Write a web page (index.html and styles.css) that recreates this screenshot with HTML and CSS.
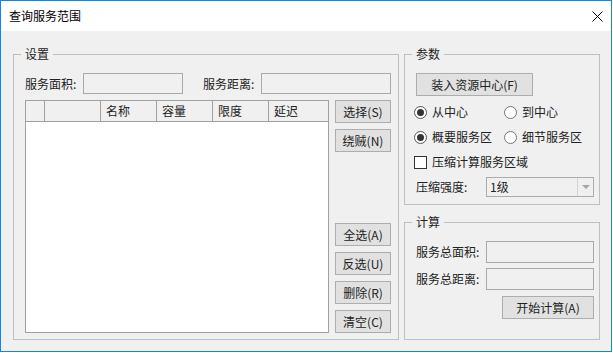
FILE: index.html
```html
<!DOCTYPE html>
<html lang="zh-CN">
<head>
    <meta charset="UTF-8">
    <title>查询服务范围</title>
    <link rel="stylesheet" href="styles.css">
</head>
<body>
    <div class="window">
        <div class="titlebar">
            <span class="title">查询服务范围</span>
            <svg class="close" width="11" height="11" viewBox="0 0 11 11">
                <path d="M0.5 0.5 L10.5 10.5 M10.5 0.5 L0.5 10.5" stroke="#000" stroke-width="1" fill="none"/>
            </svg>
        </div>
        <div class="content">
            <div class="group group-main">
                <span class="legend">设置</span>
                <div class="field-row">
                    <span class="label">服务面积:</span>
                    <div class="textbox area-box"></div>
                    <span class="label label-gap">服务距离:</span>
                    <div class="textbox dist-box"></div>
                </div>
                <div class="list-row">
                    <div class="grid">
                        <div class="grid-head">
                            <div class="cell"></div>
                            <div class="cell"></div>
                            <div class="cell">名称</div>
                            <div class="cell">容量</div>
                            <div class="cell">限度</div>
                            <div class="cell">延迟</div>
                        </div>
                        <div class="grid-body"></div>
                    </div>
                    <div class="side-buttons">
                        <div class="btn-stack">
                            <button class="btn small">选择(S)</button>
                            <button class="btn small">绕贼(N)</button>
                        </div>
                        <div class="btn-stack">
                            <button class="btn small">全选(A)</button>
                            <button class="btn small">反选(U)</button>
                            <button class="btn small">删除(R)</button>
                            <button class="btn small">清空(C)</button>
                        </div>
                    </div>
                </div>
            </div>

            <div class="side">
                <div class="group group-params">
                    <span class="legend">参数</span>
                    <button class="btn load-btn">装入资源中心(F)</button>
                    <div class="option-row">
                        <label class="option"><span class="radio checked"></span>从中心</label>
                        <label class="option"><span class="radio"></span>到中心</label>
                    </div>
                    <div class="option-row">
                        <label class="option"><span class="radio checked"></span>概要服务区</label>
                        <label class="option"><span class="radio"></span>细节服务区</label>
                    </div>
                    <div class="option-row">
                        <label class="option wide"><span class="checkbox"></span>压缩计算服务区域</label>
                    </div>
                    <div class="select-row">
                        <span class="label">压缩强度:</span>
                        <div class="select">
                            <span class="select-value">1级</span>
                            <span class="select-arrow"></span>
                        </div>
                    </div>
                </div>

                <div class="group group-calc">
                    <span class="legend">计算</span>
                    <div class="calc-row">
                        <span class="label">服务总面积:</span>
                        <div class="textbox calc-box"></div>
                    </div>
                    <div class="calc-row">
                        <span class="label">服务总距离:</span>
                        <div class="textbox calc-box"></div>
                    </div>
                    <div class="calc-actions">
                        <button class="btn start-btn">开始计算(A)</button>
                    </div>
                </div>
            </div>
        </div>
    </div>
</body>
</html>
```

FILE: styles.css
```css
body {
    margin: 0;
    background: #fff;
    color: #222;
    font-family: "Noto Sans CJK SC", "Noto Sans", sans-serif;
    font-size: 12px;
    line-height: 16px;
}
.window {
    width: 612px;
    height: 352px;
    box-sizing: border-box;
    border: 1px solid #1883d7;
    display: flex;
    flex-direction: column;
}
.titlebar {
    height: 30px;
    flex: none;
    display: flex;
    align-items: center;
    justify-content: space-between;
    padding: 0 8px;
    background: #fff;
}
.title {
    color: #000;
}
.content {
    flex: 1;
    display: flex;
    align-items: flex-start;
    gap: 5px;
    padding: 23px 11px 0 12px;
    background: #f0f0f0;
}
.group {
    position: relative;
    box-sizing: border-box;
    border: 1px solid #bfbfbf;
}
.legend {
    position: absolute;
    top: -9px;
    left: 7px;
    padding: 0 4px;
    background: #f0f0f0;
}
.group-main {
    width: 386px;
    height: 286px;
    padding: 18px 7px 0 11px;
}
.label {
    flex: none;
}
.field-row {
    display: flex;
    align-items: center;
    height: 21px;
    margin-bottom: 6px;
}
.field-row .label {
    width: 58px;
}
.label-gap {
    margin-left: 20px;
}
.textbox {
    box-sizing: border-box;
    height: 21px;
    border: 1px solid #a9a9a9;
    background: #f0f0f0;
}
.area-box {
    width: 100px;
}
.dist-box {
    flex: 1;
}
.list-row {
    display: flex;
    gap: 6px;
    height: 233px;
}
.grid {
    flex: 1;
    display: flex;
    flex-direction: column;
    border: 1px solid #a0a0a0;
    background: #fff;
}
.grid-head {
    display: grid;
    grid-template-columns: 19px 56px 56px 56px 56px 1fr;
    height: 21px;
    box-sizing: border-box;
    border-bottom: 1px solid #a0a0a0;
    background: #f0f0f0;
}
.cell {
    padding-left: 5px;
    line-height: 20px;
    border-right: 1px solid #a0a0a0;
}
.cell:last-child {
    border-right: none;
}
.grid-body {
    flex: 1;
}
.side-buttons {
    width: 56px;
    display: flex;
    flex-direction: column;
    justify-content: space-between;
}
.btn-stack {
    display: flex;
    flex-direction: column;
    gap: 6px;
}
.btn {
    box-sizing: border-box;
    height: 23px;
    padding: 0;
    border: 1px solid #adadad;
    background: #e1e1e1;
    color: #222;
    font: inherit;
    line-height: 20px;
}
.btn.small {
    width: 56px;
}
.side {
    width: 196px;
    display: flex;
    flex-direction: column;
    gap: 17px;
}
.group-params {
    height: 151px;
    padding: 18px 5px 0 11px;
}
.load-btn {
    display: block;
    width: 117px;
}
.option-row {
    display: flex;
    height: 16px;
    margin: 8px 0 0 -2px;
}
.option-row + .option-row {
    margin-top: 9px;
}
.option {
    width: 100px;
    display: flex;
    align-items: center;
    gap: 5px;
    white-space: nowrap;
}
.option.wide {
    width: auto;
}
.radio {
    width: 13px;
    height: 13px;
    box-sizing: border-box;
    border: 1px solid #777;
    border-radius: 50%;
    background: #fff;
    display: flex;
    align-items: center;
    justify-content: center;
}
.radio.checked {
    border-color: #555;
}
.radio.checked::after {
    content: "";
    width: 7px;
    height: 7px;
    border-radius: 50%;
    background: #333;
}
.checkbox {
    width: 13px;
    height: 13px;
    box-sizing: border-box;
    border: 1px solid #333;
    background: #fff;
}
.select-row {
    display: flex;
    align-items: center;
    margin-top: 7px;
    height: 20px;
}
.select-row .label {
    width: 70px;
}
.select {
    width: 108px;
    height: 20px;
    box-sizing: border-box;
    border: 1px solid #acacac;
    background: #f0f0f0;
    display: flex;
}
.select-value {
    flex: 1;
    padding-left: 3px;
    line-height: 18px;
}
.select-arrow {
    width: 15px;
    border-left: 1px solid #d4d4d4;
    position: relative;
}
.select-arrow::after {
    content: "";
    position: absolute;
    left: 4px;
    top: 7px;
    border-left: 4px solid transparent;
    border-right: 4px solid transparent;
    border-top: 4px solid #a6a6a6;
}
.group-calc {
    height: 118px;
    padding: 18px 5px 0 11px;
}
.calc-row {
    display: flex;
    align-items: center;
    justify-content: space-between;
    margin-bottom: 5px;
}
.calc-box {
    width: 108px;
    height: 22px;
}
.calc-actions {
    display: flex;
    justify-content: flex-end;
    margin-top: 6px;
}
.start-btn {
    width: 92px;
}
```
